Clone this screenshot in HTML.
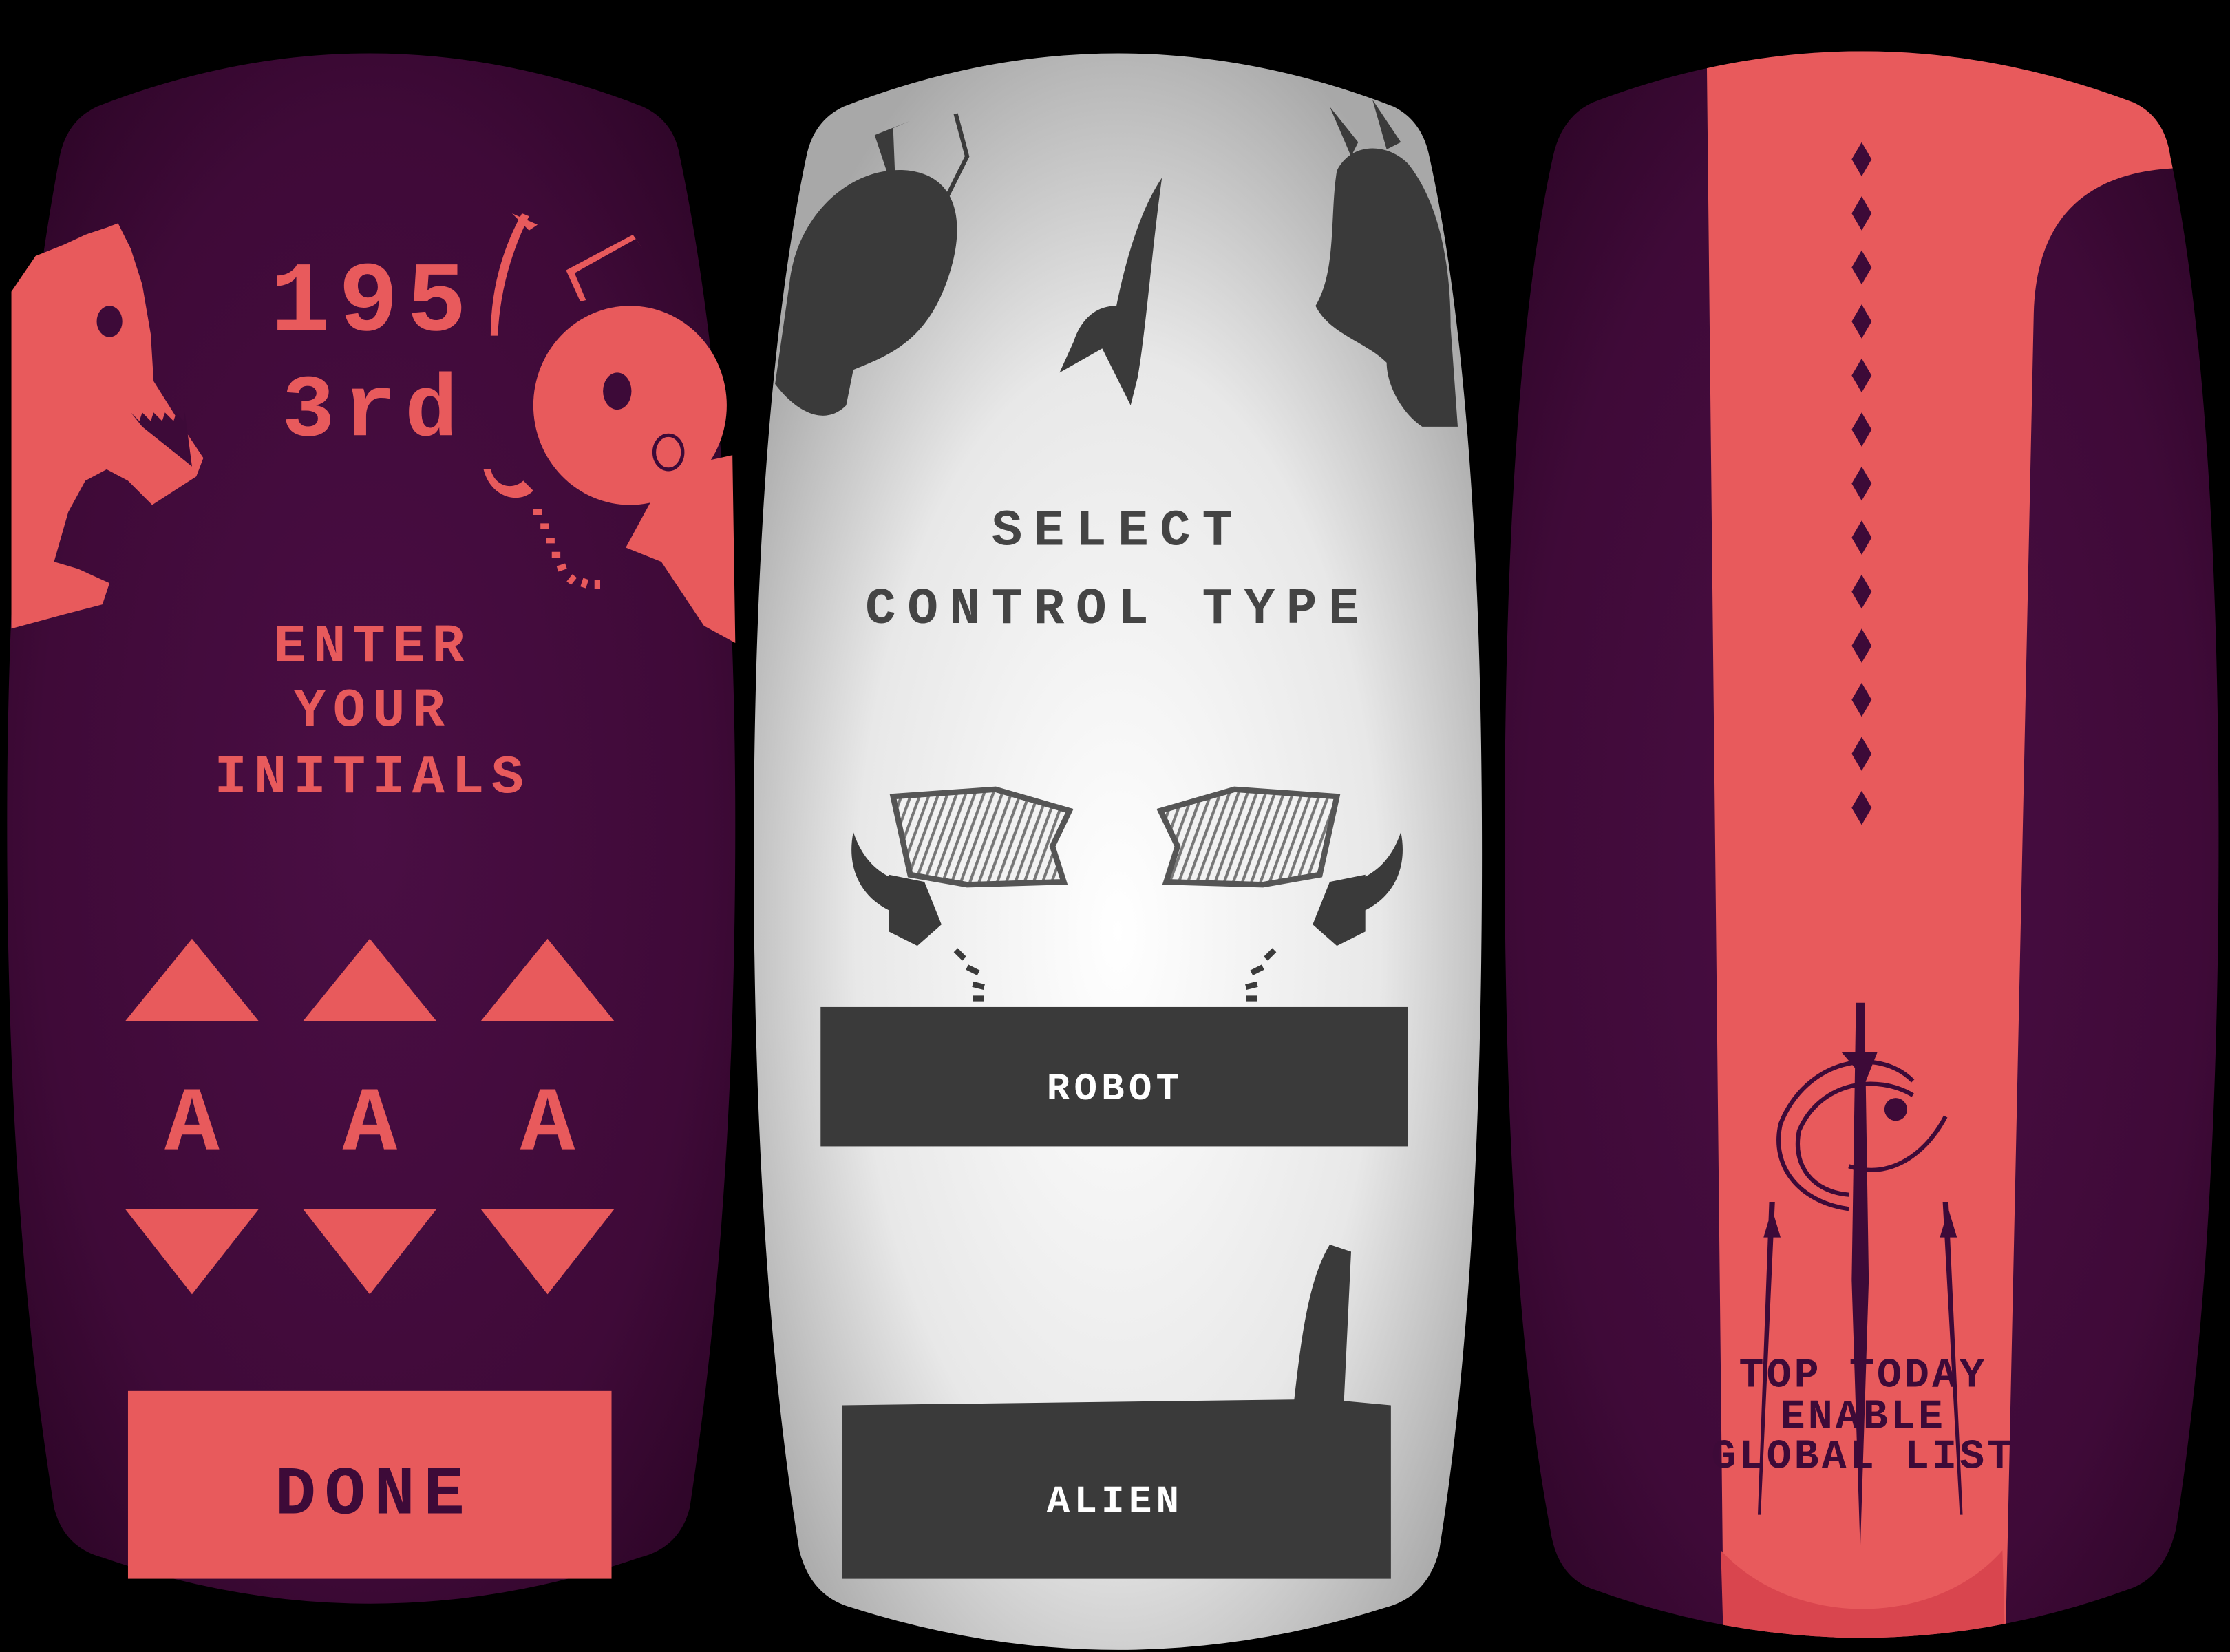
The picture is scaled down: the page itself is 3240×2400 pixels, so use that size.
<!DOCTYPE html>
<html><head><meta charset="utf-8"><style>
html,body{margin:0;padding:0;background:#000;width:3240px;height:2400px;overflow:hidden}
svg{display:block}
text{font-family:"Liberation Mono",monospace;font-weight:bold;text-anchor:middle}
</style></head><body>
<svg width="3240" height="2400" viewBox="0 0 1568 1161.5" preserveAspectRatio="none" xmlns="http://www.w3.org/2000/svg">
<defs>
<radialGradient id="wg" cx="0.5" cy="0.55" r="0.6">
<stop offset="0" stop-color="#ffffff"/><stop offset="0.6" stop-color="#e8e8e8"/><stop offset="1" stop-color="#a8a8a8"/>
</radialGradient>
<radialGradient id="pg" cx="0.5" cy="0.5" r="0.65">
<stop offset="0" stop-color="#4a0e44"/><stop offset="0.7" stop-color="#3f0a38"/><stop offset="1" stop-color="#2c0526"/>
</radialGradient>
<pattern id="hatch" width="6" height="6" patternUnits="userSpaceOnUse" patternTransform="rotate(20)">
<rect width="6" height="6" fill="#f2f2f2"/><rect width="2" height="6" fill="#777"/>
</pattern>
<clipPath id="rc"><path d="M1120 72 Q1309 0 1500 72 Q1522 82 1526 110 C1545 200 1560 350 1560 590 C1560 830 1545 980 1530 1075 Q1522 1110 1495 1118 Q1309 1185 1122 1118 Q1095 1110 1090 1075 C1072 980 1058 830 1058 590 C1058 350 1072 200 1092 110 Q1098 82 1120 72 Z"/></clipPath>
</defs>
<rect width="1568" height="1161.5" fill="#000"/>

<!-- LEFT PANEL -->
<path d="M68 75 Q260 0 452 75 Q474 85 478 110 C497 200 517 350 517 580 C517 810 500 960 485 1060 Q478 1088 450 1095 Q260 1160 72 1095 Q45 1088 38 1060 C22 960 5 810 5 580 C5 350 25 200 42 110 Q47 85 68 75 Z" fill="url(#pg)"/>
<g fill="#e85a5c">
<!-- dino -->
<path d="M8 205 L25 180 L45 172 L60 165 L75 160 L83 157 L92 175 L100 200 L106 235 L108 268 L125 295 L143 322 L138 335 L107 355 L90 338 L75 330 L60 338 L48 360 L38 395 L55 400 L77 410 L72 425 L45 432 L8 442 Z"/>
<!-- robot -->
<ellipse cx="443" cy="285" rx="68" ry="70"/>
<path d="M470 330 L515 320 L517 452 L495 440 L465 395 L440 385 Z"/>
<path d="M345 236 Q345 190 367 150 L372 152 Q352 192 350 236 Z"/>
<path d="M360 150 L378 158 L372 162 Z"/>
<path d="M408 212 L398 190 L445 165 L452 175 L447 168 L404 192 L412 211 Z"/>
<path d="M340 330 C345 350 365 355 375 345 L368 338 C360 345 348 342 345 330 Z"/>
<path d="M88 718 L135 660 L182 718 Z M213 718 L260 660 L307 718 Z M338 718 L385 660 L432 718 Z"/>
<path d="M88 850 L135 910 L182 850 Z M213 850 L260 910 L307 850 Z M338 850 L385 910 L432 850 Z"/>
<rect x="90" y="978" width="340" height="132"/>
</g>
<g fill="none" stroke="#e85a5c" stroke-width="4">
<path d="M375 360 l6 0 M380 370 l6 0 M384 380 l6 0 M388 390 l6 0 M392 400 l6 -2 M400 410 l4 -5 M410 413 l2 -6 M420 414 l0 -6"/>
</g>
<g fill="#3d0a38">
<ellipse cx="77" cy="226" rx="9" ry="11"/>
<ellipse cx="434" cy="275" rx="10" ry="13"/>
<path d="M92 290 l6 6 l2 -6 l6 6 l2 -6 l6 6 l2 -6 l6 6 l2 -6 l5 6 l1 -6 L135 328 L100 300 Z"/>
</g>
<g fill="none" stroke="#3d0a38" stroke-width="2.5"><ellipse cx="470" cy="318" rx="10" ry="12"/></g>
<g fill="#e85a5c">
<text x="262" y="232" font-size="70" letter-spacing="6">195</text>
<text x="263" y="306" font-size="62" letter-spacing="6">3rd</text>
<text x="262" y="465" font-size="38" letter-spacing="5">ENTER</text>
<text x="262" y="510" font-size="38" letter-spacing="5">YOUR</text>
<text x="262" y="557" font-size="38" letter-spacing="5">INITIALS</text>
<text x="135" y="808" font-size="64">A</text>
<text x="260" y="808" font-size="64">A</text>
<text x="385" y="808" font-size="64">A</text>
</g>
<text x="263" y="1064" font-size="48" fill="#3d0a38" letter-spacing="6">DONE</text>

<!-- MIDDLE PANEL -->
<path d="M593 75 Q786 0 980 75 Q1000 85 1005 110 C1025 200 1042 350 1042 600 C1042 840 1028 990 1012 1090 Q1004 1122 975 1130 Q786 1190 598 1130 Q570 1122 562 1090 C546 990 530 840 530 600 C530 350 548 200 567 110 Q572 85 593 75 Z" fill="url(#wg)"/>
<g fill="#3a3a3a">
<path d="M555 200 C560 150 600 115 640 120 C675 125 680 160 665 200 C650 240 625 250 600 260 L595 285 C580 300 560 290 545 270 Z"/>
<path d="M630 140 L615 95 L640 85 L628 90 Z" />
<path d="M660 150 L680 110 L672 80" fill="none" stroke="#3a3a3a" stroke-width="3"/>
<path d="M817 125 C800 150 790 190 785 215 C770 215 760 225 755 240 L745 262 L775 245 L795 285 L800 265 C806 230 810 175 817 125 Z"/>
<path d="M940 120 C950 100 975 100 990 115 C1010 140 1020 180 1020 230 L1025 300 L1000 300 C985 290 975 270 975 255 C960 240 935 235 925 215 C940 190 935 150 940 120 Z"/>
<path d="M950 110 L935 75 L955 100 Z M975 105 L965 70 L985 100 Z"/>
<path d="M600 585 C595 610 605 630 625 640 L635 620 C615 615 605 600 600 585 Z"/>
<path d="M985 585 C990 610 980 630 960 640 L950 620 C970 615 980 600 985 585 Z"/>
<path d="M625 615 L650 620 L662 650 L645 665 L625 655 Z"/>
<path d="M960 615 L935 620 L923 650 L940 665 L960 655 Z"/>
<rect x="577" y="708" width="413" height="98"/>
<path d="M592 988 L910 984 C915 940 920 900 935 875 L950 880 L945 985 L978 988 L978 1110 L592 1110 Z"/>
</g>
<g fill="url(#hatch)" stroke="#555" stroke-width="4">
<path d="M628 560 L700 555 L752 570 L740 595 L748 620 L680 622 L640 615 Z"/>
<path d="M940 560 L868 555 L816 570 L828 595 L820 620 L888 622 L928 615 Z"/>
</g>
<g fill="none" stroke="#3a3a3a" stroke-width="4">
<path d="M672 668 l6 6 M680 680 l8 4 M684 692 l8 2 M684 702 l8 0"/>
<path d="M896 668 l-6 6 M888 680 l-8 4 M884 692 l-8 2 M884 702 l-8 0"/>
</g>
<g fill="#444">
<text x="786" y="383" font-size="36" letter-spacing="8">SELECT</text>
<text x="786" y="438" font-size="36" letter-spacing="8">CONTROL TYPE</text>
</g>
<text x="784" y="773" font-size="27" fill="#fff" letter-spacing="3">ROBOT</text>
<text x="784" y="1063" font-size="27" fill="#fff" letter-spacing="3">ALIEN</text>

<!-- RIGHT PANEL -->
<g clip-path="url(#rc)">
<rect x="1050" y="30" width="520" height="1160" fill="url(#pg)"/>
<path d="M1200 30 L1540 30 L1540 118 C1470 118 1432 150 1430 220 L1410 1160 L1212 1160 Z" fill="#e85a5c"/>
<path d="M1408 1090 L1410 1160 L1212 1160 L1210 1090 C1260 1145 1360 1145 1408 1090 Z" fill="#d9454e"/>
<g fill="#3d0a38">
<path d="M1309 100 l7 12 l-7 12 l-7 -12Z M1309 138 l7 12 l-7 12 l-7 -12Z M1309 176 l7 12 l-7 12 l-7 -12Z M1309 214 l7 12 l-7 12 l-7 -12Z M1309 252 l7 12 l-7 12 l-7 -12Z M1309 290 l7 12 l-7 12 l-7 -12Z M1309 328 l7 12 l-7 12 l-7 -12Z M1309 366 l7 12 l-7 12 l-7 -12Z M1309 404 l7 12 l-7 12 l-7 -12Z M1309 442 l7 12 l-7 12 l-7 -12Z M1309 480 l7 12 l-7 12 l-7 -12Z M1309 518 l7 12 l-7 12 l-7 -12Z M1309 556 l7 12 l-7 12 l-7 -12Z"/>
<path d="M1305 705 L1311 705 L1314 900 L1308 1090 L1302 900 Z"/>
<path d="M1295 740 L1320 740 L1312 760 Z"/>
<path d="M1244 845 L1236 1065 L1238 1065 L1248 845 Z M1370 845 L1380 1065 L1378 1065 L1366 845 Z"/>
<path d="M1246 850 l-6 20 l12 0 Z M1370 850 l-6 20 l12 0 Z"/>
<circle cx="1333" cy="780" r="8"/>
</g>
<g fill="none" stroke="#3d0a38" stroke-width="3">
<path d="M1345 760 C1320 735 1270 745 1252 790 C1245 820 1265 845 1300 850"/>
<path d="M1345 770 C1320 755 1280 760 1265 795 C1260 820 1275 838 1300 840"/>
<path d="M1300 820 C1330 830 1355 810 1368 785"/>
</g>
<g fill="#3d0a38" style="font-weight:normal">
<text x="1310" y="975" font-size="29" letter-spacing="2">TOP TODAY</text>
<text x="1310" y="1004" font-size="29" letter-spacing="2">ENABLE</text>
<text x="1310" y="1032" font-size="29" letter-spacing="2">GLOBAL LIST</text>
</g>
</g>
</svg>
</body></html>
